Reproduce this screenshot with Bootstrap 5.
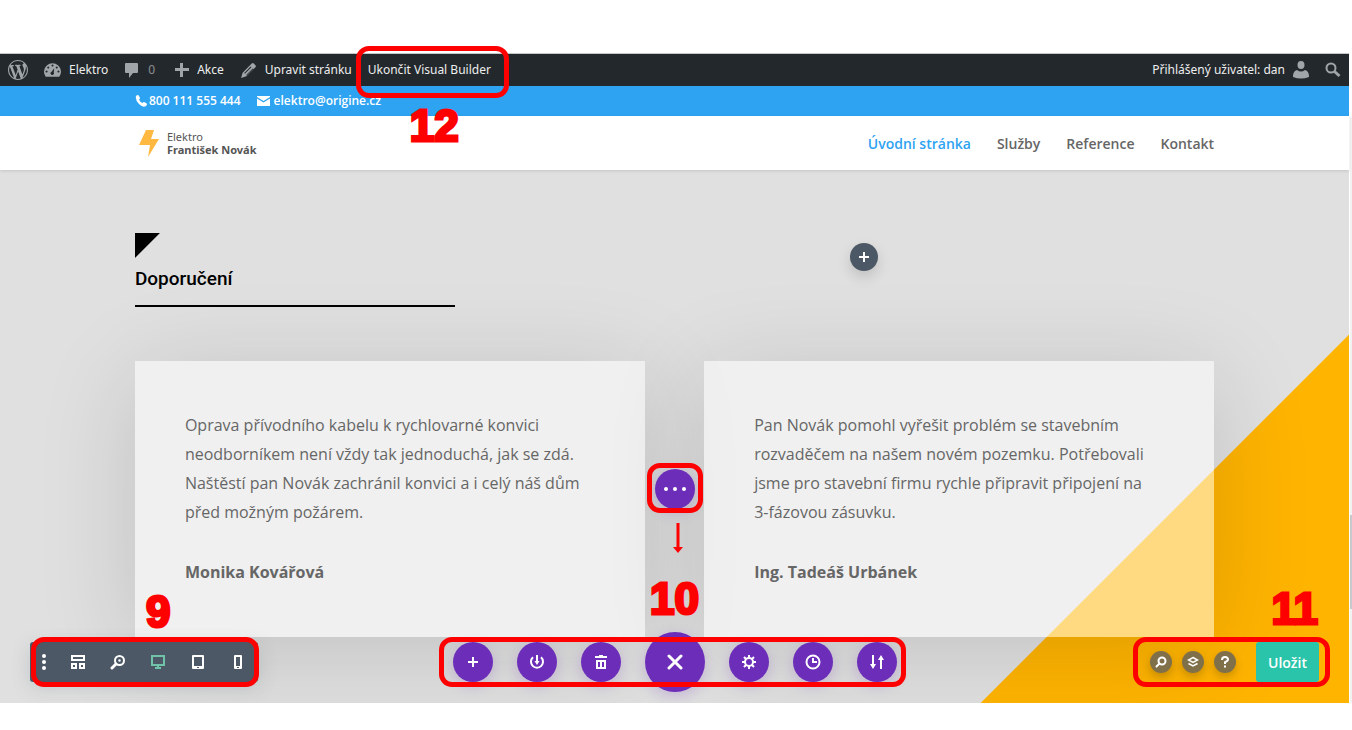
<!DOCTYPE html>
<html lang="cs">
<head>
<meta charset="utf-8">
<meta name="viewport" content="width=device-width, initial-scale=1">
<title>Elektro František Novák</title>
<link href="https://cdn.jsdelivr.net/npm/bootstrap@5.3.0/dist/css/bootstrap.min.css" rel="stylesheet">
<style>
  body { font-family: "Open Sans", "Noto Sans", sans-serif; background: #fff; color: #666; }
  a { text-decoration: none; color: inherit; }
  svg { display: block; flex: none; }
  .shell { margin: 53px 3px 27px 0; position: relative; }
  .scroll-track { position: absolute; right: -3px; top: 64px; bottom: 0; width: 2px; background: #f2f2f2; }
  .scroll-thumb { position: absolute; right: 0; top: 68%; height: 16%; width: 2px; background: #c8c8cc; }
  .wrap80 { width: 80%; margin: 0 auto; }
  .adminbar { height: 33px; background: #23282d; color: #eee; font: 12px/32px "Noto Sans", sans-serif; border-top: 1px solid #c4c6c8; }
  .adminbar svg { fill: #a0a5aa; }
  .topinfo { height: 30px; background: #2ea3f2; color: #fff; font-size: 12px; font-weight: 600; }
  .masthead { height: 54px; background: #fff; box-shadow: 0 1px 3px rgba(0,0,0,.12); position: relative; z-index: 1; }
  .logo-text { font: 11px/13px "Noto Sans", sans-serif; color: #555; }
  .menu { font-size: 14px; font-weight: 600; gap: 26px; }
  .menu .current { color: #2ea3f2; }
  .testimonials { position: relative; overflow: hidden; padding: 63px 0 66px; background: linear-gradient(315deg, #ffb400 260px, #e0e0e0 261px); }
  .third { width: 29.66%; border-bottom: 2px solid #000; height: 74px; }
  .twothirds { width: 64.84%; height: 48px; }
  .corner { width: 25px; height: 25px; background: #000; clip-path: polygon(0 0, 100% 0, 0 100%); }
  h1 { font: 500 19px/24px Roboto, sans-serif; color: #000; margin: 9px 0 0; }
  .quotes { margin-top: 54px; }
  .quote { width: 47.25%; padding: 50px; background: rgba(255,255,255,.5); box-shadow: 0 15px 100px rgba(0,0,0,.14); font-size: 16px; line-height: 29px; }
  .quote p { margin: 0 0 31px; }
  .round { border: 0; border-radius: 50%; padding: 0; display: flex; align-items: center; justify-content: center; width: 40px; height: 40px; color: #fff; background: #6c2eb9; box-shadow: 0 4px 14px rgba(108,46,185,.22); }
  .round-lg { width: 60px; height: 60px; }
  .round-add { width: 28px; height: 28px; background: #4c5866; box-shadow: 0 6px 14px rgba(0,0,0,.15); }
  .round-sm { width: 22px; height: 22px; background: #80704a; box-shadow: 0 4px 8px rgba(0,0,0,.2); }
  .overlay { position: absolute; bottom: 11px; height: 60px; display: flex; align-items: center; }
  .views { left: 30px; }
  .viewbar { height: 40px; background: #4c5866; border-radius: 3px; box-shadow: 0 5px 20px rgba(76,88,102,.2); }
  .viewbar button { border: 0; background: none; padding: 0; width: 40px; height: 40px; color: #fff; display: flex; align-items: center; justify-content: center; }
  .viewbar button:first-child { width: 28px; }
  .viewbar .active { color: #70c3a9; }
  .tools { left: 50%; transform: translateX(-50%); gap: 24px; }
  .saving { right: 30px; gap: 10px; }
  .save { border: 0; border-radius: 3px; background: #29c4a9; color: #fff; width: 63px; height: 40px; margin-left: 10px; font-size: 14px; font-weight: 600; }
  .more { position: absolute; bottom: 194px; left: 50%; transform: translateX(-50%); }
  .frame { position: absolute; border: 5px solid #f00; border-radius: 13px; pointer-events: none; inset: 5px -9px 5px -14px; }
  .views .frame { inset: 5px -1px 5px 1px; }
  .saving .frame { inset: 5px -11px 5px -17px; }
  .more .frame { inset: -6px -8px -4px -8px; }
  .adminbar .frame { inset: -8px -18px -12px -12px; z-index: 3; }
  .num { position: absolute; color: #f00; font: bold 44px/50px Impact, "Liberation Sans Narrow", "Liberation Sans", sans-serif; -webkit-text-stroke: 3px #f00; z-index: 3; }
  .n12 { left: 42px; top: 47px; }
  .n9 { left: 146px; bottom: 66px; }
  .n10 { left: 50%; bottom: 79px; transform: translateX(-50%); }
  .n11 { right: 31px; bottom: 69px; }
  .down { position: absolute; left: 50%; bottom: 150px; margin-left: -2px; }
</style>
</head>
<body>
<div class="shell">
  <nav class="adminbar d-flex justify-content-between px-2">
    <div class="d-flex align-items-center">
      <a href="#" aria-label="WordPress"><svg width="20" height="20" viewBox="0 0 20 20"><path fill-rule="evenodd" d="M20 10c0-5.51-4.49-10-10-10C4.48 0 0 4.49 0 10c0 5.52 4.48 10 10 10 5.51 0 10-4.48 10-10zM7.780 15.370L4.370 6.220c.55-.02 1.170-.08 1.170-.08.5-.06.44-1.130-.06-1.110 0 0-1.450.11-2.370.11-.18 0-.37 0-.58-.01C4.120 2.690 6.870 1.110 10 1.110c2.330 0 4.450.87 6.050 2.340-.68-.11-1.650.39-1.650 1.580 0 .74.45 1.360.9 2.100.35.61.55 1.360.55 2.460 0 1.490-1.400 5-1.400 5l-3.030-8.370c.54-.02.82-.17.82-.17.5-.05.44-1.250-.06-1.220 0 0-1.440.12-2.380.12-.87 0-2.330-.12-2.330-.12-.5-.03-.56 1.200-.06 1.220l.92.08 1.260 3.410zM17.410 10c.24-.64.74-1.870.43-4.250.7 1.290 1.050 2.710 1.050 4.250 0 3.290-1.730 6.240-4.400 7.780.97-2.590 1.940-5.200 2.920-7.780zM6.100 18.090C3.120 16.650 1.110 13.530 1.110 10c0-1.300.23-2.480.72-3.590C3.250 10.300 4.670 14.200 6.100 18.090zm4.030-6.630l2.580 6.980c-.86.29-1.760.45-2.710.45-.79 0-1.570-.11-2.290-.33.81-2.380 1.620-4.740 2.420-7.100z"/></svg></a>
      <a href="#" class="d-flex align-items-center ms-3"><svg width="17" height="16" viewBox="0 0 20 18"><path fill-rule="evenodd" d="M2 17a10 10 0 1 1 16 0zM10 2.500a1.200 1.200 0 1 0 .01 0zM5 4.800a1.200 1.200 0 1 0 .01 0zM15 4.800a1.200 1.200 0 1 0 .01 0zM3 9.500a1.200 1.200 0 1 0 .01 0zM17 9.500a1.200 1.200 0 1 0 .01 0zM12 7l-3 4a2 2 0 1 0 2.500 1z"/></svg><span class="ms-2">Elektro</span></a>
      <a href="#" class="d-flex align-items-center ms-3"><svg width="16" height="16" viewBox="0 0 16 16"><path d="M2 1h11q1 0 1 1v8q0 1-1 1H9l-4 5v-5H2q-1 0-1-1V2q0-1 1-1z"/></svg><span class="ms-2 opacity-50">0</span></a>
      <a href="#" class="d-flex align-items-center ms-3"><svg width="14" height="14" viewBox="0 0 14 14" class="ms-1"><path d="M5 0h3v5h6v3H8v6H5V8H0V5h5z"/></svg><span class="ms-2">Akce</span></a>
      <a href="#" class="d-flex align-items-center ms-3"><svg width="17" height="17" viewBox="0 0 16 16"><path fill-rule="evenodd" d="M11 1.500q1-1 2 0l1.500 1.500q1 1 0 2L6 13.500 1 15l1.500-5zM10 4.200L4 10.300l.6.7 6.200-6.100zM12 6.100L5.800 12.200l.5.500 6.200-6.100z"/></svg><span class="ms-2">Upravit stránku</span></a>
      <div class="position-relative ms-3"><a href="#">Ukončit Visual Builder</a><span class="frame"></span><span class="num n12">12</span></div>
    </div>
    <div class="d-flex align-items-center">
      <a href="#" class="d-flex align-items-center">Přihlášený uživatel: dan<svg class="ms-2" width="16" height="18" viewBox="0 0 16 18"><path d="M8 0a3.500 4 0 1 1 0 8 3.500 4 0 0 1 0-8zM0 16q-.2-6 4-7 4 3 8 0 4.200 1 4 7-8 3-16 0z"/></svg></a>
      <a href="#" aria-label="Hledat" class="ms-3"><svg width="16" height="16" viewBox="0 0 16 16"><g fill="none" stroke="#a0a5aa"><circle cx="6" cy="6" r="4.500" stroke-width="2"/><path d="M9.500 9.500L14.500 14" stroke-width="3"/></g></svg></a>
    </div>
  </nav>
  <div class="topinfo">
    <div class="wrap80 d-flex align-items-center h-100">
      <svg width="12" height="12" viewBox="0 0 12 12" fill="#fff"><path d="M1 1q2-2 3 0l1 2q0 1-1 1.500 1 2.500 3.500 3.500.7-1 1.500-1l2 1q2 1 0 3-3 2-7-2T1 1z"/></svg><span class="me-3" style="padding-left:2px">800 111 555 444</span>
      <a href="#" class="d-flex align-items-center"><svg width="13" height="10" viewBox="0 0 13 10" fill="#fff"><path d="M0 0h13v1L6.500 5 0 1zM0 2.500L6.500 6.500 13 2.500V10H0z"/></svg><span class="ps-1">elektro@origine.cz</span></a>
    </div>
  </div>
  <header class="masthead">
    <div class="wrap80 d-flex align-items-center justify-content-between h-100">
      <a href="#" class="d-flex align-items-center ps-1"><svg width="20" height="27" viewBox="0 0 20 27" fill="#ffb840"><path d="M7 0h8l-3 9h8L9 27l2-12H0z"/></svg><span class="logo-text ps-2">Elektro<br><b>František Novák</b></span></a>
      <nav class="menu d-flex"><a href="#" class="current">Úvodní stránka</a><a href="#">Služby</a><a href="#">Reference</a><a href="#">Kontakt</a></nav>
    </div>
  </header>
  <main class="testimonials">
    <div class="wrap80">
      <div class="d-flex justify-content-between">
        <div class="third"><div class="corner"></div><h1>Doporučení</h1></div>
        <div class="twothirds d-flex align-items-center justify-content-center"><button class="round round-add" aria-label="Přidat"><svg width="12" height="12" viewBox="0 0 12 12" stroke="#fff" stroke-width="2"><path d="M6 1v10M1 6h10"/></svg></button></div>
      </div>
      <div class="quotes d-flex justify-content-between">
        <article class="quote"><p>Oprava přívodního kabelu k rychlovarné konvici neodborníkem není vždy tak jednoduchá, jak se zdá. Naštěstí pan Novák zachránil konvici a i celý náš dům před možným požárem.</p><b>Monika Kovářová</b></article>
        <article class="quote"><p>Pan Novák pomohl vyřešit problém se stavebním rozvaděčem na našem novém pozemku. Potřebovali jsme pro stavební firmu rychle připravit připojení na <span class="text-nowrap">3-fázovou</span> zásuvku.</p><b>Ing. Tadeáš Urbánek</b></article>
      </div>
    </div>

    <div class="more"><button class="round" aria-label="Více"><svg width="24" height="6" viewBox="0 0 24 6" fill="#fff"><circle cx="3" cy="3" r="2"/><circle cx="12" cy="3" r="2"/><circle cx="21" cy="3" r="2"/></svg></button><span class="frame"></span></div>
    <svg class="down" width="10" height="30" viewBox="0 0 10 30"><path d="M3.500 0h3v24H10l-5 6-5-6h3.500z" fill="#f00"/></svg>
    <span class="num n9">9</span><span class="num n10">10</span><span class="num n11">11</span>

    <div class="overlay views">
      <div class="viewbar d-flex">
        <button aria-label="Nabídka"><svg width="6" height="18" viewBox="0 0 6 18" fill="#fff"><circle cx="3" cy="3" r="2"/><circle cx="3" cy="9" r="2"/><circle cx="3" cy="15" r="2"/></svg></button>
        <button aria-label="Drátový model"><svg width="14" height="14" viewBox="0 0 14 14" fill="none" stroke="currentColor" stroke-width="2"><path d="M1 1h12v4H1zM1 9h4v4H1zM9 9h4v4H9z"/></svg></button>
        <button aria-label="Lupa"><svg width="16" height="16" viewBox="0 0 16 16" fill="none" stroke="currentColor" stroke-width="2"><circle cx="9.500" cy="6.500" r="4.500"/><path d="M6 10l-4 4" stroke-width="3" stroke-linecap="round"/><circle cx="9.500" cy="6.500" r="1.200" fill="currentColor" stroke="none"/></svg></button>
        <button class="active" aria-label="Počítač"><svg width="14" height="16" viewBox="0 0 14 16"><path d="M1 2h12v9H1z" fill="none" stroke="currentColor" stroke-width="2"/><path d="M6 11h2v2h2v2H4v-2h2z" fill="currentColor"/></svg></button>
        <button aria-label="Tablet"><svg width="12" height="14" viewBox="0 0 12 14"><path fill="currentColor" fill-rule="evenodd" d="M1 0h10q1 0 1 1v12q0 1-1 1H1q-1 0-1-1V1q0-1 1-1zM2 2v9h8V2zM5 12h2v1H5z"/></svg></button>
        <button aria-label="Telefon"><svg width="8" height="14" viewBox="0 0 8 14"><path fill="currentColor" fill-rule="evenodd" d="M1 0h6q1 0 1 1v12q0 1-1 1H1q-1 0-1-1V1q0-1 1-1zM2 2v9h4V2zM3 12h2v1H3z"/></svg></button>
      </div>
      <span class="frame"></span>
    </div>

    <div class="overlay tools">
      <button class="round" aria-label="Přidat"><svg width="12" height="12" viewBox="0 0 12 12" stroke="#fff" stroke-width="2"><path d="M6 1v10M1 6h10"/></svg></button>
      <button class="round" aria-label="Uložit do knihovny"><svg width="16" height="16" viewBox="0 0 16 16" fill="none" stroke="#fff" stroke-width="2"><path d="M4 3.200a6 6 0 1 0 8 0M8 1v7"/><path d="M5.500 7h5L8 11z" fill="#fff" stroke="none"/></svg></button>
      <button class="round" aria-label="Smazat"><svg width="14" height="16" viewBox="0 0 14 16"><path fill="#fff" fill-rule="evenodd" d="M5 1h4v1h4v2H1V2h4zM2 6h10v9H2zM4 8v5h2V8zM8 8v5h2V8z"/></svg></button>
      <button class="round round-lg" aria-label="Zavřít"><svg width="16" height="16" viewBox="0 0 16 16" stroke="#fff" stroke-width="3" stroke-linecap="round"><path d="M2 2l12 12M14 2L2 14"/></svg></button>
      <button class="round" aria-label="Nastavení"><svg width="16" height="16" viewBox="0 0 16 16" fill="none" stroke="#fff" stroke-width="2"><circle cx="8" cy="8" r="4"/><path d="M8 1v3M8 12v3M1 8h3M12 8h3M3 3l2 2M11 11l2 2M13 3l-2 2M5 11l-2 2"/></svg></button>
      <button class="round" aria-label="Historie"><svg width="16" height="16" viewBox="0 0 16 16" fill="none" stroke="#fff" stroke-width="2"><circle cx="8" cy="8" r="6.500"/><path d="M8 4v4h4"/></svg></button>
      <button class="round" aria-label="Přenositelnost"><svg width="14" height="16" viewBox="0 0 14 16" fill="#fff"><path d="M2 1h2v9h2l-3 5-3-5h2zM10 15h2V6h2l-3-5-3 5h2z"/></svg></button>
      <span class="frame"></span>
    </div>

    <div class="overlay saving">
      <button class="round round-sm" aria-label="Hledat"><svg width="12" height="12" viewBox="0 0 12 12" fill="none" stroke="#fff" stroke-width="2"><circle cx="7" cy="5" r="3.500"/><path d="M4.500 7.500L1.500 10.500" stroke-linecap="round"/></svg></button>
      <button class="round round-sm" aria-label="Vrstvy"><svg width="12" height="12" viewBox="0 0 12 12" fill="none" stroke="#fff" stroke-width="1.500"><path d="M6 1.500L10.500 4 6 6.500 1.500 4zM1.500 7.500L6 10l4.500-2.500"/></svg></button>
      <button class="round round-sm" aria-label="Nápověda"><svg width="10" height="12" viewBox="0 0 10 12" fill="none" stroke="#fff" stroke-width="2"><path d="M2 4q0-3 3-3t3 2.500Q8 5 5 6.200V8M5 9.500v2"/></svg></button>
      <button class="save">Uložit</button>
      <span class="frame"></span>
    </div>
  </main>
  <div class="scroll-track"><div class="scroll-thumb"></div></div>
</div>
<script src="https://cdn.jsdelivr.net/npm/bootstrap@5.3.0/dist/js/bootstrap.bundle.min.js"></script>
</body>
</html>
